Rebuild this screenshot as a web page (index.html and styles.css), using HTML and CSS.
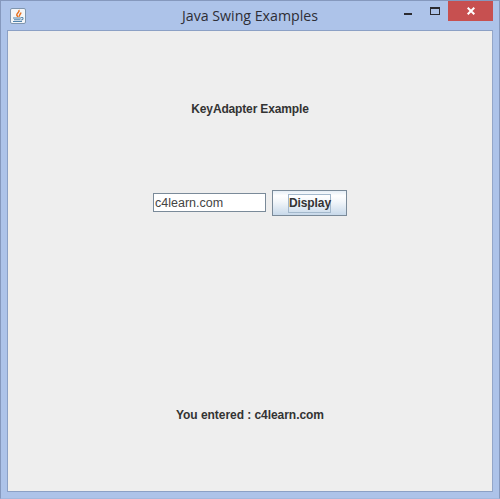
FILE: index.html
```html
<!DOCTYPE html>
<html lang="en">
<head>
<meta charset="utf-8">
<title>Java Swing Examples</title>
<link rel="stylesheet" href="styles.css">
</head>
<body>
<div class="window">
  <div class="titlebar">
    <svg class="app-icon" width="16" height="16" viewBox="0 0 16 16">
      <rect x="0.5" y="0.5" width="15" height="15" rx="1.5" fill="#f4f6f8" stroke="#7f95ad"/>
      <path d="M8.8 2 C10.4 4 6.2 5 6.8 7 C7 8 7.6 8.3 8 9 M10.8 4.5 C11 6.2 8.8 6.8 9.4 8.8" fill="none" stroke="#e8701e" stroke-width="1.5"/>
      <path d="M3 10H11M4 11.8H10.5M3 13.5H12" stroke="#4f82ab" stroke-width="1.1"/>
      <path d="M11 9.6H13V11.4L10.8 12.2" fill="none" stroke="#4f82ab" stroke-width="1"/>
    </svg>
    <div class="title">Java Swing Examples</div>
    <div class="controls">
      <svg class="min-icon" width="8" height="2" viewBox="0 0 8 2"><rect width="8" height="2" fill="#2b2b30"/></svg>
      <svg class="max-icon" width="10" height="8" viewBox="0 0 10 8"><rect x="0.5" y="0.5" width="9" height="7" fill="none" stroke="#2b2b30"/><rect width="10" height="2" fill="#2b2b30"/></svg>
      <div class="close">
        <svg width="8" height="8" viewBox="0 0 8 8"><path d="M0.7 0.7L7.3 7.3M7.3 0.7L0.7 7.3" stroke="#fff" stroke-width="2"/></svg>
      </div>
    </div>
  </div>
  <div class="content">
    <div class="heading">KeyAdapter Example</div>
    <div class="form-row">
      <input class="field" type="text" value="c4learn.com">
      <button class="display-btn" type="button"><span class="focus-ring">Display</span></button>
    </div>
    <div class="result">You entered : c4learn.com</div>
  </div>
</div>
</body>
</html>
```
FILE: styles.css
```css
html, body {
  margin: 0;
  padding: 0;
}
body {
  width: 500px;
  height: 499px;
  overflow: hidden;
  font-family: "Liberation Sans", Arial, sans-serif;
}
.window {
  box-sizing: border-box;
  width: 500px;
  height: 499px;
  display: flex;
  flex-direction: column;
  background: #adc3e9;
  border-top: 1px solid #8598bd;
  border-left: 1px solid #8598bd;
  border-right: 1px solid #8598bd;
  border-bottom: 1px solid #a3b9de;
  padding: 0 6px 6px 6px;
}
.titlebar {
  height: 29px;
  flex: none;
  display: flex;
  align-items: flex-start;
  position: relative;
}
.app-icon {
  margin: 7px 0 0 3px;
  flex: none;
}
.title {
  position: absolute;
  left: 0;
  right: 0;
  top: 6px;
  text-align: center;
  font-family: "Open Sans", "Liberation Sans", sans-serif;
  font-size: 14.2px;
  line-height: 18px;
  color: #2e2e36;
}
.controls {
  margin-left: auto;
  display: flex;
  align-items: flex-start;
}
.min-icon {
  margin: 12px 0 0 0;
}
.max-icon {
  margin: 6px 0 0 18px;
}
.close {
  width: 45px;
  height: 20px;
  margin-left: 8px;
  background: #c75050;
  display: flex;
  align-items: center;
  justify-content: center;
}
.content {
  flex: 1;
  background: #eeeeee;
  border: 1px solid #8ba0c5;
  border-right-color: #93a6c8;
  display: flex;
  flex-direction: column;
  align-items: center;
  color: #333333;
}
.heading {
  margin-top: 70px;
  font-size: 12px;
  font-weight: 700;
  line-height: 16px;
  letter-spacing: -0.15px;
}
.form-row {
  margin-top: 73px;
  display: flex;
  align-items: center;
  gap: 6px;
  height: 26px;
}
.field {
  box-sizing: border-box;
  width: 113px;
  height: 19px;
  padding: 0 1px;
  margin: 0 0 1px 0;
  background: #ffffff;
  border: 1px solid #7a8a99;
  border-radius: 0;
  outline: none;
  color: #444444;
  font-family: "Liberation Sans", Arial, sans-serif;
  font-size: 12.5px;
}
.display-btn {
  box-sizing: border-box;
  width: 75px;
  height: 26px;
  padding: 0;
  margin: 0;
  display: flex;
  align-items: center;
  justify-content: center;
  border: 1px solid #7a8a99;
  border-radius: 0;
  background: linear-gradient(#e6eef6 0%, #ffffff 20%, #f2f6fa 45%, #c8d9ea 100%);
  color: #333333;
  font-family: "Liberation Sans", Arial, sans-serif;
  font-size: 12px;
  font-weight: 700;
  letter-spacing: -0.1px;
}
.focus-ring {
  display: block;
  border: 1px solid #a3b8cc;
  padding: 1px 0;
  line-height: 15px;
  width: 41px;
  text-align: center;
  white-space: nowrap;
}
.result {
  margin-top: auto;
  margin-bottom: 68px;
  font-size: 12px;
  font-weight: 700;
  line-height: 16px;
  letter-spacing: -0.05px;
}
```
